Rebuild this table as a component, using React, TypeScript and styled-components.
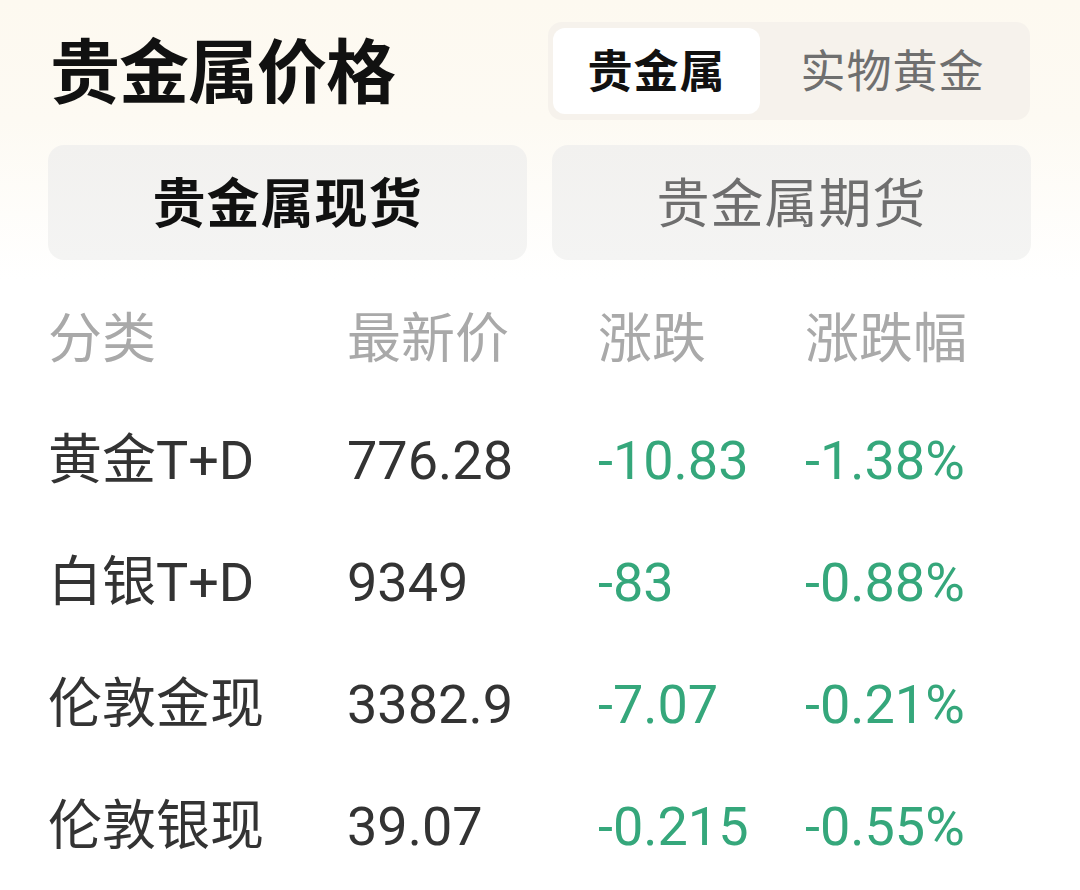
import React from "react";
import styled, { createGlobalStyle } from "styled-components";

const Global = createGlobalStyle`
  html, body { margin: 0; padding: 0; background: #ffffff; }
  body { font-family: Roboto, "Noto Sans CJK SC", sans-serif; }
`;

const Page = styled.div`
  width: 1080px;
  height: 890px;
  box-sizing: border-box;
  padding: 22px 50px 0 48px;
  background: linear-gradient(180deg, #fdf9f0 0px, #fdfaf3 120px, #ffffff 280px);
  overflow: hidden;
`;

const TopBar = styled.div`
  display: flex;
  align-items: center;
  justify-content: space-between;
  height: 98px;
`;

const Title = styled.h1`
  margin: 0 0 6px 2px;
  font-family: "Noto Sans CJK SC", sans-serif;
  font-size: 70px;
  font-weight: 700;
  color: #111111;
  letter-spacing: -1px;
  line-height: 1;
`;

const Segmented = styled.div`
  display: flex;
  width: 482px;
  height: 98px;
  box-sizing: border-box;
  padding: 6px 5px;
  background: #f6f2ec;
  border-radius: 14px;
`;

const SegItem = styled.div<{ $active?: boolean }>`
  flex: ${(p) => (p.$active ? "0 0 207px" : "1 1 auto")};
  display: flex;
  align-items: center;
  justify-content: center;
  padding-bottom: 6px;
  border-radius: 12px;
  background: ${(p) => (p.$active ? "#ffffff" : "transparent")};
  font-family: "Noto Sans CJK SC", sans-serif;
  font-size: 45px;
  font-weight: ${(p) => (p.$active ? 700 : 400)};
  color: ${(p) => (p.$active ? "#111111" : "#6f6f6f")};
  letter-spacing: 1px;
`;

const SubTabs = styled.div`
  display: grid;
  grid-template-columns: 479px 479px;
  column-gap: 25px;
  margin-top: 25px;
`;

const SubTab = styled.div<{ $active?: boolean }>`
  height: 115px;
  box-sizing: border-box;
  padding-bottom: 6px;
  display: flex;
  align-items: center;
  justify-content: center;
  border-radius: 16px;
  background: linear-gradient(180deg, #f2f1ef 0%, #f4f4f3 100%);
  font-family: "Noto Sans CJK SC", sans-serif;
  font-size: 53px;
  font-weight: ${(p) => (p.$active ? 700 : 400)};
  color: ${(p) => (p.$active ? "#111111" : "#6e6e6e")};
  letter-spacing: 1px;
`;

const Table = styled.div`
  margin-top: 20px;
  display: flex;
  flex-direction: column;
`;

const Row = styled.div<{ $header?: boolean }>`
  display: grid;
  grid-template-columns: 299px 251px 207px 1fr;
  align-items: center;
  height: ${(p) => (p.$header ? "120px" : "122px")};
`;

const Cell = styled.div<{ $tone: "head" | "name" | "num" | "green" }>`
  font-family: Roboto, "Noto Sans CJK SC", sans-serif;
  font-size: 54px;
  line-height: 1;
  white-space: nowrap;
  color: ${(p) =>
    p.$tone === "head"
      ? "#a9a9a9"
      : p.$tone === "green"
      ? "#35a77b"
      : "#333333"};
`;

const rows = [
  { name: "黄金T+D", price: "776.28", change: "-10.83", pct: "-1.38%" },
  { name: "白银T+D", price: "9349", change: "-83", pct: "-0.88%" },
  { name: "伦敦金现", price: "3382.9", change: "-7.07", pct: "-0.21%" },
  { name: "伦敦银现", price: "39.07", change: "-0.215", pct: "-0.55%" },
];

export default function App() {
  return (
    <>
      <Global />
      <Page>
        <TopBar>
          <Title>贵金属价格</Title>
          <Segmented>
            <SegItem $active>贵金属</SegItem>
            <SegItem>实物黄金</SegItem>
          </Segmented>
        </TopBar>
        <SubTabs>
          <SubTab $active>贵金属现货</SubTab>
          <SubTab>贵金属期货</SubTab>
        </SubTabs>
        <Table>
          <Row $header>
            <Cell $tone="head">分类</Cell>
            <Cell $tone="head">最新价</Cell>
            <Cell $tone="head">涨跌</Cell>
            <Cell $tone="head">涨跌幅</Cell>
          </Row>
          {rows.map((r) => (
            <Row key={r.name}>
              <Cell $tone="name">{r.name}</Cell>
              <Cell $tone="num">{r.price}</Cell>
              <Cell $tone="green">{r.change}</Cell>
              <Cell $tone="green">{r.pct}</Cell>
            </Row>
          ))}
        </Table>
      </Page>
    </>
  );
}
